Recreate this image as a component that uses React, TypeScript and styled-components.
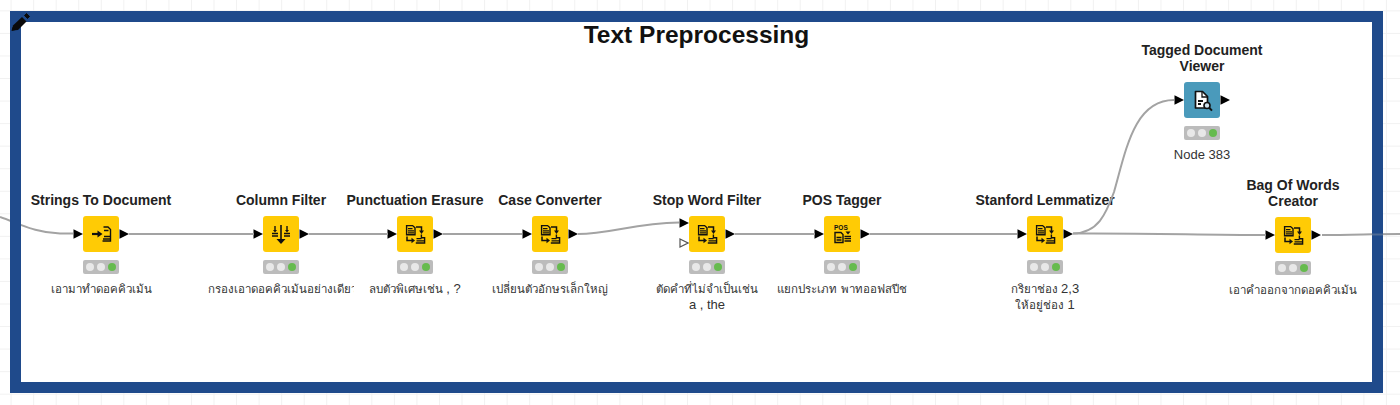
import React from "react";
import styled, { createGlobalStyle } from "styled-components";

// top left corner of the annotation's inside, node coordinates below are page coordinates
const ORIGIN_X = 21;
const ORIGIN_Y = 22;

const GlobalStyle = createGlobalStyle`
  html, body {
    margin: 0;
    padding: 0;
    background: #fff;
    overflow: hidden;
  }
`;

const Canvas = styled.div`
  position: relative;
  width: 1400px;
  height: 405px;
  overflow: hidden;
  background-color: #fff;
  background-image: linear-gradient(to right, #f1f1f1 1px, transparent 1px),
    linear-gradient(to bottom, #f1f1f1 1px, transparent 1px);
  background-size: 22.56px 22.56px;
  background-position: 10.6px 10.4px;
  font-family: "Liberation Sans", "Noto Sans", "DejaVu Sans", sans-serif;
  color: #1a1a1a;
`;

const Annotation = styled.div`
  position: absolute;
  left: 10px;
  top: 11px;
  width: 1373px;
  height: 382px;
  box-sizing: border-box;
  border: 11px solid #1f4a8b;
  background: #fff;
  overflow: hidden;
`;

const AnnotationTitle = styled.div`
  font-size: 24.5px;
  font-weight: 700;
  line-height: 26px;
  text-align: center;
  color: #111;
`;

const EdgeLayer = styled.svg<{ $over?: boolean }>`
  position: absolute;
  left: 0;
  top: 0;
  pointer-events: none;
  opacity: ${(props) => (props.$over ? 0.35 : 1)};
`;

const Edge = styled.path`
  fill: none;
  stroke: #a3a3a3;
  stroke-width: 2;
`;

const Pencil = styled.svg`
  position: absolute;
  left: 10px;
  top: 11px;
`;

const NodeBox = styled.div<{ $cx: number; $top: number }>`
  position: absolute;
  left: ${(props) => props.$cx - ORIGIN_X - 100}px;
  top: ${(props) => props.$top - ORIGIN_Y - 40}px;
  width: 200px;
  display: flex;
  flex-direction: column;
  align-items: center;
`;

const NodeTitle = styled.div`
  height: 32px;
  margin-bottom: 8px;
  display: flex;
  align-items: flex-end;
  font-size: 14px;
  font-weight: 700;
  line-height: 16px;
  text-align: center;
  white-space: pre;
  color: #222;
`;

const PortRow = styled.div`
  display: flex;
  align-items: center;
`;

const InPorts = styled.div<{ $double?: boolean }>`
  width: 10px;
  height: 36px;
  box-sizing: border-box;
  display: flex;
  flex-direction: column;
  justify-content: ${(props) => (props.$double ? "space-between" : "center")};
  padding: ${(props) => (props.$double ? "2px 0 4px" : "0")};
`;

const NodeIcon = styled.div<{ $view?: boolean }>`
  width: 36px;
  height: 36px;
  border-radius: 3px;
  background: ${(props) => (props.$view ? "#4a9abb" : "#ffcb05")};
`;

const TrafficLight = styled.div`
  width: 36px;
  height: 14px;
  margin-top: 8px;
  box-sizing: border-box;
  padding: 0 3px;
  display: flex;
  align-items: center;
  gap: 3px;
  border-radius: 2px;
  background: #bcbcbc;
`;

const Lamp = styled.span<{ $on?: boolean }>`
  width: 8px;
  height: 8px;
  border-radius: 50%;
  background: ${(props) => (props.$on ? "#66bb4e" : "#e8e8e8")};
`;

const NodeLabel = styled.div<{ $width: number }>`
  width: ${(props) => props.$width}px;
  margin-top: 7px;
  font-size: 11.5px;
  line-height: 16px;
  text-align: center;
  white-space: pre;
  overflow: hidden;
  color: #333;
`;

const Latin = styled.span`
  font-size: 13px;
`;

const Port = ({ hollow }: { hollow?: boolean }) => (
  <svg width="10" height="10" viewBox="0 0 10 10" style={{ display: "block" }}>
    {hollow ? (
      <path d="M1 1l8 4-8 4z" fill="#fff" stroke="#555" strokeWidth="1.2" />
    ) : (
      <path d="M0.5 0.3L10 5 0.5 9.7z" fill="#000" />
    )}
  </svg>
);

const Glyph = ({ children }: { children: React.ReactNode }) => (
  <svg
    width="36"
    height="36"
    viewBox="0 0 36 36"
    fill="none"
    stroke="#111"
    strokeWidth="1.3"
    style={{ display: "block" }}
  >
    {children}
  </svg>
);

const ToDocumentIcon = () => (
  <Glyph>
    <path d="M9 18h7" strokeWidth="2.2" />
    <path d="M14.5 14.5l5 3.5-5 3.5z" fill="#111" stroke="none" />
    <path d="M20.5 11h4.5l2.5 2.5v11.5H19.5" strokeWidth="1.4" />
    <path d="M21 14.5h4.5M21 20.5h6M20 23h7" strokeWidth="1.4" />
  </Glyph>
);

const FilterIcon = () => (
  <Glyph>
    <path d="M18 9v15" strokeWidth="1.6" />
    <path d="M13.5 23h9L18 28z" fill="#111" stroke="none" />
    <path d="M12 10v5M24 10v5" strokeWidth="1.4" />
    <path d="M10 14h4l-2 2.5zM22 14h4l-2 2.5z" fill="#111" stroke="none" />
    <path d="M9 17.5h6M9 20h6M21 17.5h6M21 20h6" strokeWidth="1.3" />
  </Glyph>
);

const TransformIcon = () => (
  <Glyph>
    <path d="M9.6 9.6h6l2.4 2.2v7H9.6z" strokeWidth="1.4" />
    <path d="M11 12.6h4.5M11 14.8h6M11 16.8h6" />
    <path d="M19 11h5.5v4.5" strokeWidth="1.5" />
    <path d="M22 14.5h5L24.5 18z" fill="#111" stroke="none" />
    <path d="M10 20.5v4h5" strokeWidth="1.5" />
    <path d="M14.5 21.8l3.5 2.7-3.5 2.7z" fill="#111" stroke="none" />
    <path d="M24.4 18.5v3.2h3.2v5.3H18.8" strokeWidth="1.4" />
    <path d="M19.5 22.6h5M19.5 24.8h8" />
  </Glyph>
);

const PosIcon = () => (
  <Glyph>
    <text
      x="10"
      y="14"
      fontFamily="Liberation Sans, sans-serif"
      fontSize="6.5"
      fontWeight="700"
      fill="#111"
      stroke="none"
    >
      POS
    </text>
    <path d="M11 16.5h6l2 2v8H11z" strokeWidth="1.4" />
    <path d="M12.5 21.5h5M12.5 24h5" strokeWidth="1.5" />
    <path d="M21.5 15.5h5L24 18.5z" fill="#111" stroke="none" />
    <path d="M20.5 20.5h6.5M20.5 22.7h6.5M20.5 25h6.5" strokeWidth="1.3" />
  </Glyph>
);

const ViewerIcon = () => (
  <Glyph>
    <path
      d="M11.5 9.5h7l5 5v11.5h-12z"
      fill="#fff"
      strokeWidth="1.7"
      strokeLinejoin="round"
    />
    <path d="M18 9.5v5.5h5.5" strokeWidth="1.3" />
    <path d="M14 19h5M14 22h3" strokeWidth="1.8" />
    <circle cx="23" cy="23.5" r="3" fill="#cfe3ee" strokeWidth="1.6" />
    <path d="M25.2 25.8l2.8 2.8" strokeWidth="2" />
  </Glyph>
);

type NodeData = {
  title: string;
  label: React.ReactNode;
  cx: number;
  top: number;
  labelWidth?: number;
  view?: boolean;
  double?: boolean;
  icon: React.ReactNode;
};

const nodes: NodeData[] = [
  { title: "Strings To Document", label: "เอามาทำดอคคิวเม้น", cx: 101, top: 216, icon: <ToDocumentIcon /> },
  { title: "Column Filter", label: "กรองเอาดอคคิวเม้นอย่างเดียว", cx: 281, top: 216, labelWidth: 146, icon: <FilterIcon /> },
  { title: "Punctuation Erasure", label: <>ลบตัวพิเศษเช่น <Latin>, ?</Latin></>, cx: 415, top: 216, icon: <TransformIcon /> },
  { title: "Case Converter", label: "เปลี่ยนตัวอักษรเล็กใหญ่", cx: 550, top: 216, icon: <TransformIcon /> },
  { title: "Stop Word Filter", label: <>{"ตัดคำที่ไม่จำเป็นเช่น\n"}<Latin>a , the</Latin></>, cx: 707, top: 216, double: true, icon: <TransformIcon /> },
  { title: "POS Tagger", label: "แยกประเภท พาทออฟสปีช", cx: 842, top: 216, labelWidth: 132, icon: <PosIcon /> },
  { title: "Stanford Lemmatizer", label: <>กริยาช่อง <Latin>2,3</Latin>{"\n"}ให้อยู่ช่อง <Latin>1</Latin></>, cx: 1045, top: 216, icon: <TransformIcon /> },
  { title: "Bag Of Words\nCreator", label: "เอาคำออกจากดอคคิวเม้น", cx: 1293, top: 217, labelWidth: 128, icon: <TransformIcon /> },
  { title: "Tagged Document\nViewer", label: <Latin>Node 383</Latin>, cx: 1202, top: 82, view: true, icon: <ViewerIcon /> },
];

const innerEdges = [
  "M0 217C20 224 36 233 60 233.5H73",
  "M129 234H254",
  "M309 234H388",
  "M443 234H522",
  "M578 234C610 234 635 223 679 222.5",
  "M735 234H815",
  "M870 234H1017",
  "M1073 233.5C1150 233 1200 235 1266 235",
  "M1073 233.5C1098 233 1106 214 1114 192C1126 150 1134 100 1174 100",
  "M1322 235C1350 235 1375 234 1400 234",
];

const WorkflowNode = ({ node }: { node: NodeData }) => (
  <NodeBox $cx={node.cx} $top={node.top}>
    <NodeTitle>{node.title}</NodeTitle>
    <PortRow>
      <InPorts $double={node.double}>
        <Port />
        {node.double && <Port hollow />}
      </InPorts>
      <NodeIcon $view={node.view}>{node.icon}</NodeIcon>
      <Port />
    </PortRow>
    <TrafficLight>
      <Lamp />
      <Lamp />
      <Lamp $on />
    </TrafficLight>
    <NodeLabel $width={node.labelWidth ?? 196}>{node.label}</NodeLabel>
  </NodeBox>
);

const App = () => {
  return (
    <Canvas>
      <GlobalStyle />
      <EdgeLayer width="1400" height="405">
        <Edge d={innerEdges[0]} />
        <Edge d={innerEdges[9]} />
      </EdgeLayer>
      <Annotation>
        <AnnotationTitle>Text Preprocessing</AnnotationTitle>
        {nodes.map((node) => (
          <WorkflowNode key={node.title} node={node} />
        ))}
        <EdgeLayer
          width="1400"
          height="405"
          viewBox={`${ORIGIN_X} ${ORIGIN_Y} 1400 405`}
        >
          {innerEdges.map((d) => (
            <Edge key={d} d={d} />
          ))}
        </EdgeLayer>
      </Annotation>
      <EdgeLayer $over width="1400" height="405">
        <Edge d="M1372 234.5H1383" />
      </EdgeLayer>
      <Pencil width="22" height="22" viewBox="0 0 22 22">
        <path d="M2 19.5l1-5L12 6l4.5 4.5L8 19z" fill="#0a0a0a" />
        <path d="M1.5 20l1-4 3 3z" fill="#0a0a0a" />
        <path
          d="M14.5 4.5l2-2 3 3-2 2z"
          fill="#0a0a0a"
          stroke="#0a0a0a"
          strokeWidth="1"
          strokeLinejoin="round"
        />
      </Pencil>
    </Canvas>
  );
};

export default App;
